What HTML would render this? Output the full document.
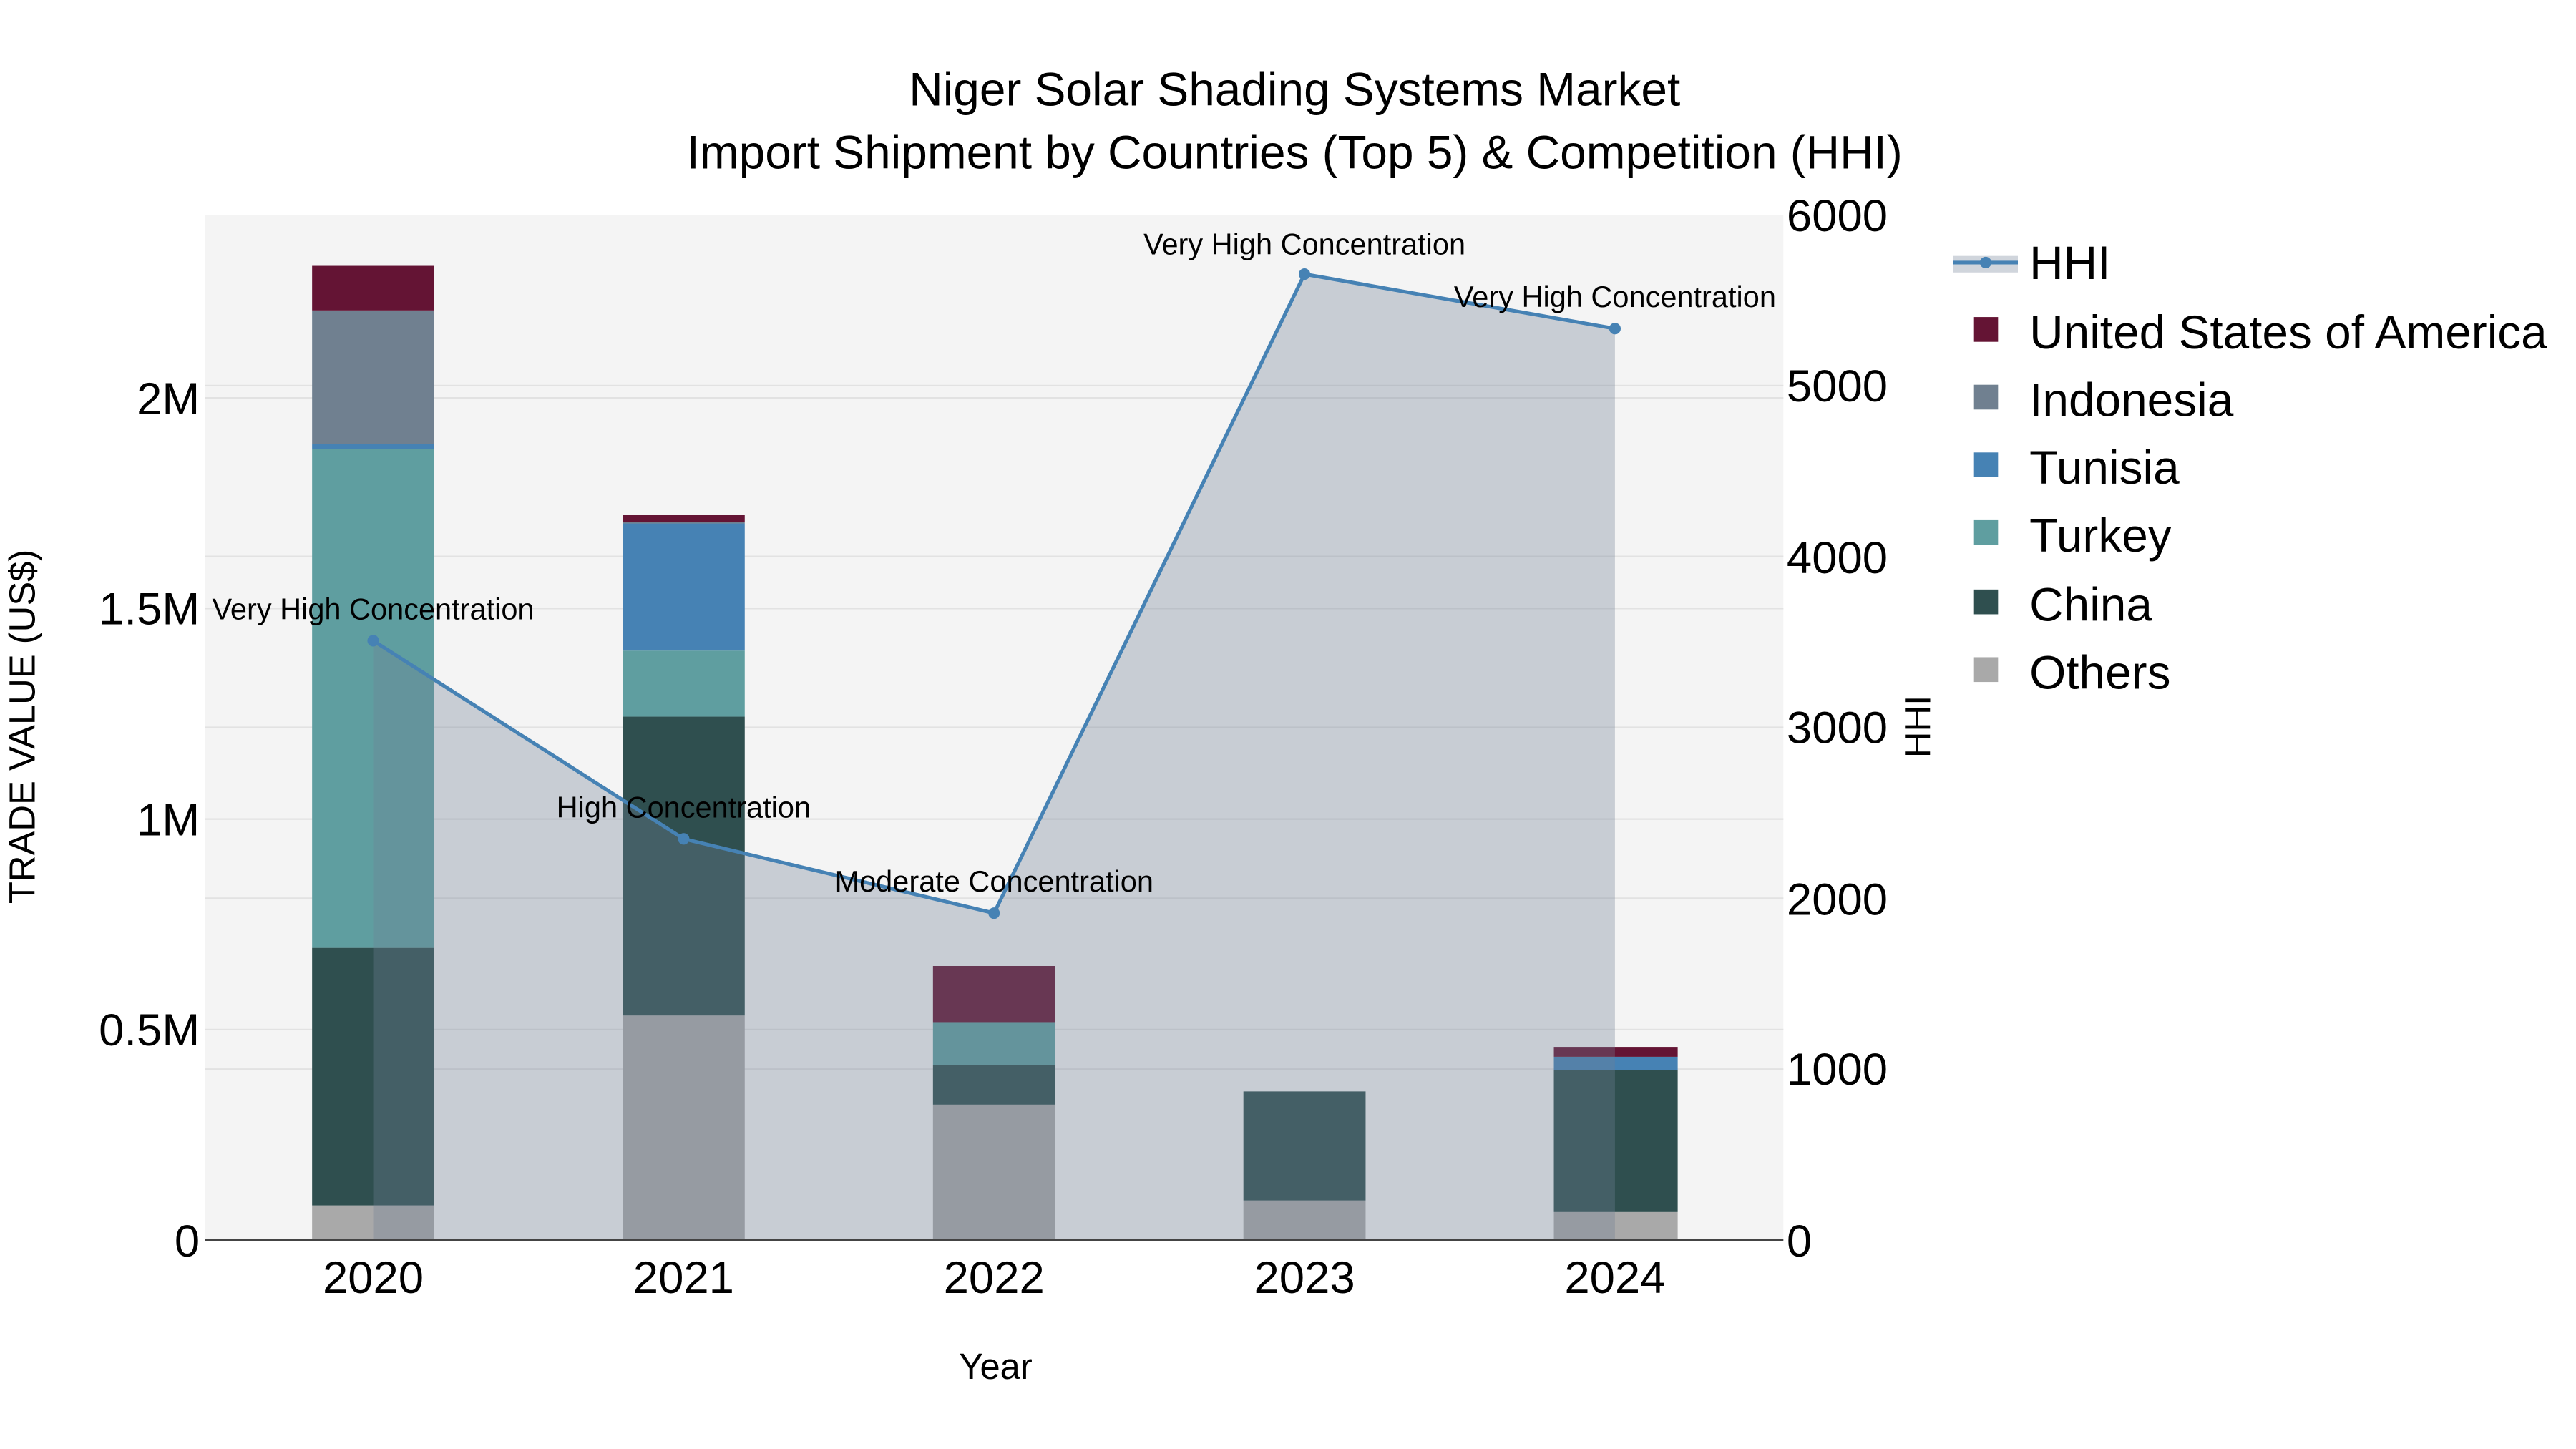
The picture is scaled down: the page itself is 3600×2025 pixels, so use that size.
<!DOCTYPE html>
<html><head><meta charset="utf-8"><style>
html,body{margin:0;padding:0;background:#fff;}
svg{display:block;}
text{font-family:"Liberation Sans",sans-serif;fill:#000;}
</style></head><body>
<svg width="3600" height="2025" viewBox="0 0 1560 877.5" xmlns="http://www.w3.org/2000/svg">
<rect x="0" y="0" width="1560" height="877.5" fill="#fff"/>
<rect x="124" y="130" width="956" height="621" fill="#f4f4f4"/>
<g stroke="#e2e2e2" stroke-width="1">
<line x1="124" x2="1080" y1="623.5" y2="623.5"/><line x1="124" x2="1080" y1="496" y2="496"/>
<line x1="124" x2="1080" y1="368.5" y2="368.5"/><line x1="124" x2="1080" y1="241" y2="241"/>
<line x1="124" x2="1080" y1="647.5" y2="647.5"/><line x1="124" x2="1080" y1="544" y2="544"/>
<line x1="124" x2="1080" y1="440.5" y2="440.5"/><line x1="124" x2="1080" y1="337" y2="337"/>
<line x1="124" x2="1080" y1="233.5" y2="233.5"/>
</g>
<g>
<rect x="189" y="730" width="74" height="21" fill="#a9a9a9"/>
<rect x="189" y="574" width="74" height="156" fill="#2f4f4f"/>
<rect x="189" y="272" width="74" height="302" fill="#5f9ea0"/>
<rect x="189" y="269" width="74" height="3" fill="#4682b4"/>
<rect x="189" y="188" width="74" height="81" fill="#708090"/>
<rect x="189" y="161" width="74" height="27" fill="#641434"/>

<rect x="377" y="615" width="74" height="136" fill="#a9a9a9"/>
<rect x="377" y="434" width="74" height="181" fill="#2f4f4f"/>
<rect x="377" y="394" width="74" height="40" fill="#5f9ea0"/>
<rect x="377" y="317" width="74" height="77" fill="#4682b4"/>
<rect x="377" y="316" width="74" height="1" fill="#708090"/>
<rect x="377" y="312" width="74" height="4" fill="#641434"/>

<rect x="565" y="669" width="74" height="82" fill="#a9a9a9"/>
<rect x="565" y="645" width="74" height="24" fill="#2f4f4f"/>
<rect x="565" y="619" width="74" height="26" fill="#5f9ea0"/>
<rect x="565" y="585" width="74" height="34" fill="#641434"/>

<rect x="753" y="727" width="74" height="24" fill="#a9a9a9"/>
<rect x="753" y="661" width="74" height="66" fill="#2f4f4f"/>

<rect x="941" y="734" width="75" height="17" fill="#a9a9a9"/>
<rect x="941" y="648" width="75" height="86" fill="#2f4f4f"/>
<rect x="941" y="640" width="75" height="8" fill="#4682b4"/>
<rect x="941" y="634" width="75" height="6" fill="#641434"/>
</g>
<path d="M226,751 L226,388 L414,508 L602,553 L790,166 L978,199 L978,751 Z" fill="rgb(112,128,150)" fill-opacity="0.33"/>
<polyline points="226,388 414,508 602,553 790,166 978,199" fill="none" stroke="#4682b4" stroke-width="2.2"/>
<g fill="#4682b4"><circle cx="226" cy="388" r="3.5"/><circle cx="414" cy="508" r="3.5"/><circle cx="602" cy="553" r="3.5"/><circle cx="790" cy="166" r="3.5"/><circle cx="978" cy="199" r="3.5"/></g>
<line x1="124" x2="1080" y1="751" y2="751" stroke="#444" stroke-width="1.3"/>
<g font-size="18" text-anchor="middle">
<text x="226" y="375">Very High Concentration</text>
<text x="414" y="495">High Concentration</text>
<text x="602" y="540">Moderate Concentration</text>
<text x="790" y="154">Very High Concentration</text>
<text x="978" y="186">Very High Concentration</text>
</g>
<g font-size="27.5" text-anchor="end">
<text x="121" y="761">0</text><text x="121" y="633">0.5M</text><text x="121" y="506">1M</text>
<text x="121" y="378">1.5M</text><text x="121" y="251">2M</text>
</g>
<g font-size="27.5" text-anchor="start">
<text x="1082" y="761">0</text><text x="1082" y="657">1000</text><text x="1082" y="554">2000</text>
<text x="1082" y="450">3000</text><text x="1082" y="347">4000</text><text x="1082" y="243">5000</text><text x="1082" y="140">6000</text>
</g>
<g font-size="27.5" text-anchor="middle">
<text x="226" y="783">2020</text><text x="414" y="783">2021</text><text x="602" y="783">2022</text><text x="790" y="783">2023</text><text x="978" y="783">2024</text>
</g>
<text x="603" y="835" font-size="22" text-anchor="middle">Year</text>
<text transform="translate(21,440) rotate(-90)" font-size="22" text-anchor="middle">TRADE VALUE (US$)</text>
<text transform="translate(1169,440) rotate(-90)" font-size="22" text-anchor="middle">HHI</text>
<g font-size="28.5" text-anchor="middle">
<text x="784" y="64">Niger Solar Shading Systems Market</text>
<text x="784" y="102">Import Shipment by Countries (Top 5) &amp; Competition (HHI)</text>
</g>
<rect x="1183" y="155" width="39" height="10" fill="rgb(112,128,150)" fill-opacity="0.33"/>
<line x1="1183" x2="1222" y1="159" y2="159" stroke="#4682b4" stroke-width="2.2"/>
<circle cx="1202.5" cy="159" r="3.5" fill="#4682b4"/>
<g>
<rect x="1195" y="192" width="15" height="15" fill="#641434"/>
<rect x="1195" y="233" width="15" height="15" fill="#708090"/>
<rect x="1195" y="274" width="15" height="15" fill="#4682b4"/>
<rect x="1195" y="315" width="15" height="15" fill="#5f9ea0"/>
<rect x="1195" y="357" width="15" height="15" fill="#2f4f4f"/>
<rect x="1195" y="398" width="15" height="15" fill="#a9a9a9"/>
</g>
<g font-size="28.5">
<text x="1229" y="169">HHI</text>
<text x="1229" y="211">United States of America</text>
<text x="1229" y="252">Indonesia</text>
<text x="1229" y="293">Tunisia</text>
<text x="1229" y="334">Turkey</text>
<text x="1229" y="376">China</text>
<text x="1229" y="417">Others</text>
</g>
</svg>
</body></html>
